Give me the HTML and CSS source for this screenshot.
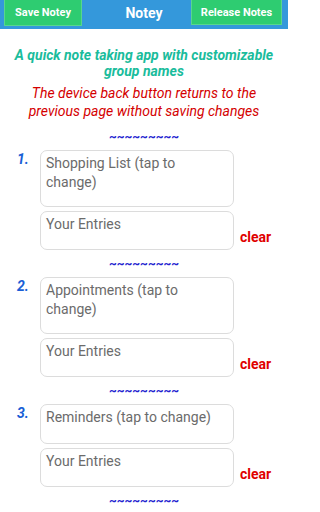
FILE: index.html
```html
<!DOCTYPE html>
<html>
<head>
<meta charset="utf-8">
<link rel="stylesheet" href="styles.css">
</head>
<body>
<div class="header">
  <div class="btn btn-left">Save Notey</div>
  <div class="title">Notey</div>
  <div class="btn btn-right">Release Notes</div>
</div>
<div class="intro">
  <p class="tagline">A quick note taking app with customizable group names</p>
  <p class="warning">The device back button returns to the previous page without saving changes</p>
</div>
<div class="sep">~~~~~~~~~</div>
<div class="section">
  <div class="num">1.</div>
  <div class="box name tall">Shopping List (tap to change)</div>
  <div></div>
  <div></div>
  <div class="box entries">Your Entries</div>
  <div class="clear">clear</div>
</div>
<div class="sep">~~~~~~~~~</div>
<div class="section">
  <div class="num">2.</div>
  <div class="box name tall">Appointments (tap to change)</div>
  <div></div>
  <div></div>
  <div class="box entries">Your Entries</div>
  <div class="clear">clear</div>
</div>
<div class="sep">~~~~~~~~~</div>
<div class="section">
  <div class="num">3.</div>
  <div class="box name">Reminders (tap to change)</div>
  <div></div>
  <div></div>
  <div class="box entries">Your Entries</div>
  <div class="clear">clear</div>
</div>
<div class="sep">~~~~~~~~~</div>
</body>
</html>
```
FILE: styles.css
```css
* { box-sizing: border-box; }
html, body { margin: 0; padding: 0; background: #fff; }
body {
  width: 288px;
  height: 512px;
  overflow: hidden;
  font-family: Roboto, "Noto Sans", sans-serif;
}
.header {
  height: 29px;
  background: #3498db;
  display: grid;
  grid-template-columns: 1fr auto 1fr;
  align-items: start;
}
.btn {
  background: #2ecc71;
  color: #fff;
  font-weight: bold;
  font-size: 11px;
  display: flex;
  align-items: center;
  justify-content: center;
  border: 1px solid #58d68d;
  border-top: none;
}
.btn-left {
  justify-self: start;
  margin-left: 4px;
  width: 78px;
  height: 26px;
}
.btn-right {
  justify-self: end;
  margin-right: 6px;
  width: 91px;
  height: 25px;
}
.title {
  color: #fff;
  font-weight: bold;
  font-size: 14px;
  line-height: 26px;
}
.intro { padding: 0 6px; }
.tagline {
  margin: 18px 0 0;
  text-align: center;
  color: #1abc9c;
  font-weight: bold;
  font-style: italic;
  font-size: 14px;
  line-height: 16px;
}
.warning {
  margin: 5px 0 0;
  text-align: center;
  color: #d40000;
  font-style: italic;
  font-size: 14px;
  line-height: 18px;
}
.sep {
  text-align: center;
  color: #2323d0;
  font-weight: bold;
  font-size: 12px;
  line-height: 14px;
  height: 14px;
  margin: 7px 0 6px;
}
.intro + .sep { margin-top: 10px; }
.section {
  display: grid;
  grid-template-columns: 40px 194px auto;
  row-gap: 4px;
}
.num {
  padding-left: 17px;
  padding-top: 1px;
  color: #1a5fd6;
  font-weight: bold;
  font-style: italic;
  font-size: 14px;
  line-height: 17px;
}
.box {
  border: 1px solid #dcdcdc;
  border-radius: 7px;
  padding: 3px 8px 0 5px;
  color: #6b6b6b;
  font-size: 14px;
  line-height: 19px;
  height: 40px;
}
.box.tall { height: 57px; }
.box.entries { height: 39px; }
.clear {
  align-self: end;
  padding-left: 6px;
  margin-bottom: 4px;
  color: #e00000;
  font-weight: bold;
  font-size: 14px;
  line-height: 17px;
}
```
